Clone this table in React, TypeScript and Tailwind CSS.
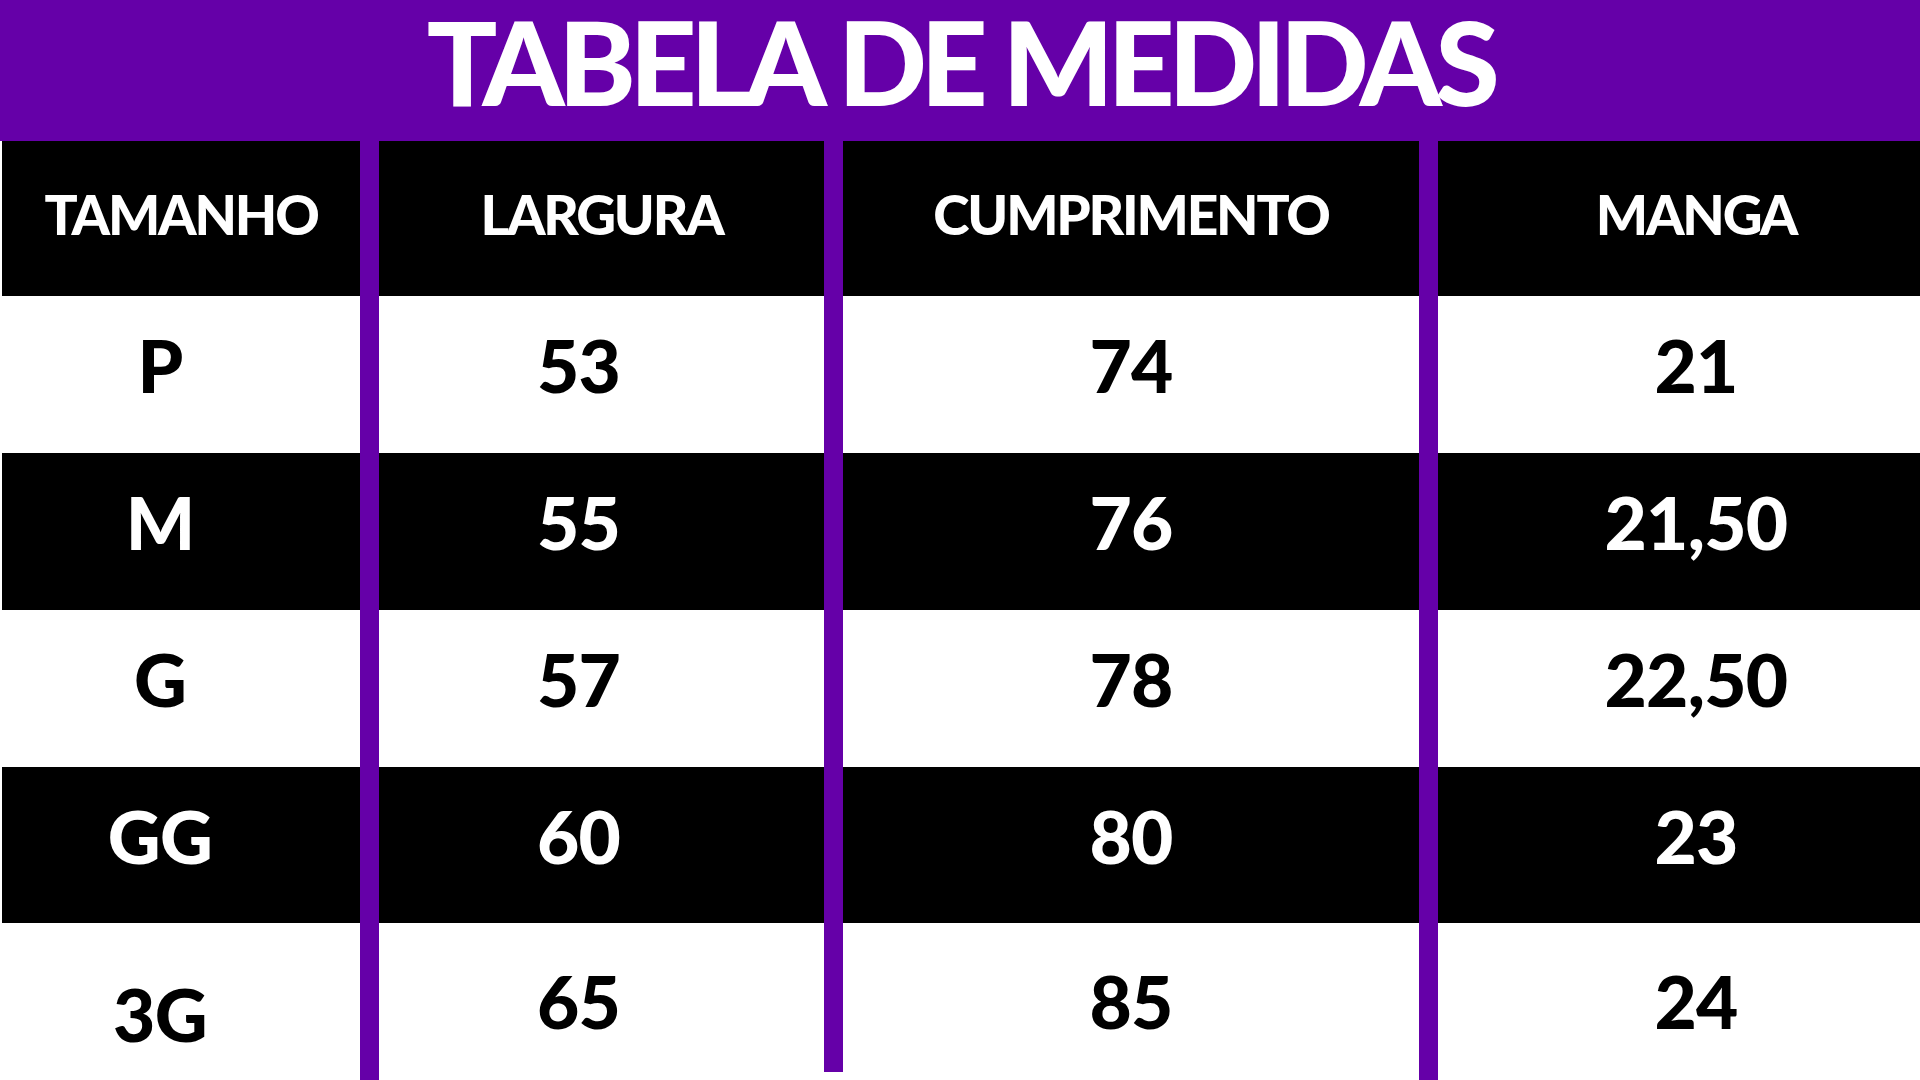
const rows = [
  { size: 'P', largura: '53', comprimento: '74', manga: '21', dark: false },
  { size: 'M', largura: '55', comprimento: '76', manga: '21,50', dark: true },
  { size: 'G', largura: '57', comprimento: '78', manga: '22,50', dark: false },
  { size: 'GG', largura: '60', comprimento: '80', manga: '23', dark: true },
  { size: '3G', largura: '65', comprimento: '85', manga: '24', dark: false },
]

const font = { fontFamily: 'Lato, "Noto Sans", sans-serif' }

function Bar({ short }: { short?: boolean }) {
  return <div className={`w-[19px] shrink-0 bg-[#6500a8] ${short ? 'mb-[8px]' : ''}`} />
}

function HeaderRow() {
  const cell = 'flex items-center justify-center bg-black pb-[9px] text-[55px] font-black uppercase tracking-[-0.04em] text-white'
  return (
    <div className="flex h-[155px] pl-[2px]">
      <div className={`${cell} w-[358px]`}>Tamanho</div>
      <Bar />
      <div className={`${cell} w-[445px]`}>Largura</div>
      <Bar />
      <div className={`${cell} w-[576px]`}>Cumprimento</div>
      <Bar />
      <div className={`${cell} flex-1 pl-[34px]`}>Manga</div>
    </div>
  )
}

export default function App() {
  return (
    <div className="flex h-[1080px] w-[1920px] flex-col overflow-hidden bg-white" style={font}>
      <div className="flex h-[141px] shrink-0 items-center justify-center bg-[#6500a8] pb-[18px]">
        <h1 className="text-[117px] leading-tight font-black tracking-[-0.055em] text-white">
          TABELA DE MEDIDAS
        </h1>
      </div>
      <HeaderRow />
      {rows.map((r, i) => {
        const last = i === rows.length - 1
        const bg = r.dark ? 'bg-black text-white' : 'bg-white text-black'
        const cell = `flex items-center justify-center text-[73px] font-black leading-none tracking-[-0.01em] ${bg} ${last ? '' : 'pb-[18px]'}`
        return (
          <div key={r.size} className={`flex shrink-0 pl-[2px] ${i === 3 ? 'h-[156px]' : 'h-[157px]'}`}>
            <div className={`${cell} w-[358px] pr-[42px] ${last ? 'pt-[26px]' : ''}`}>{r.size}</div>
            <Bar />
            <div className={`${cell} w-[445px] pr-[46px]`}>{r.largura}</div>
            <Bar short={last} />
            <div className={`${cell} w-[576px]`}>{r.comprimento}</div>
            <Bar />
            <div className={`${cell} flex-1 pl-[34px]`}>{r.manga}</div>
          </div>
        )
      })}
    </div>
  )
}
